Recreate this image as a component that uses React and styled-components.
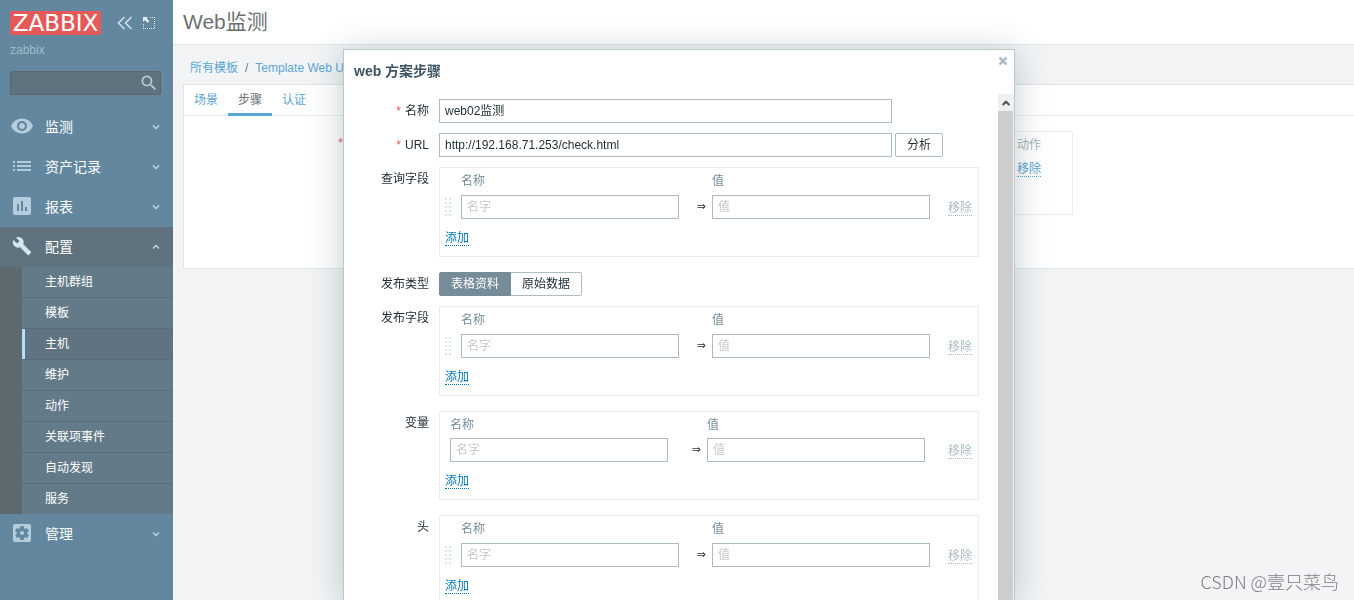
import React, { useState } from 'react';
import styled, { createGlobalStyle } from 'styled-components';
import {
  MdBuild,
  MdInsertChart,
  MdList,
  MdRemoveRedEye,
  MdSearch,
  MdSettingsApplications,
} from 'react-icons/md';

const GlobalStyle = createGlobalStyle`
  * {
    box-sizing: border-box;
  }

  body {
    margin: 0;
    background: #f2f4f5;
    color: #1f2c33;
    font-family: "Liberation Sans", "Noto Sans CJK SC", sans-serif;
    font-size: 12px;
    line-height: 24px;
  }

  button,
  input {
    font: inherit;
    color: inherit;
  }
`;

const Page = styled.div`
  display: flex;
  height: 100vh;
  overflow: hidden;
`;

/* sidebar */

const Sidebar = styled.aside`
  flex: none;
  width: 173px;
  background: #62879e;
  color: #ffffff;
`;

const SidebarTop = styled.div`
  display: flex;
  align-items: center;
  padding: 11px 0 0 10px;
`;

const Logo = styled.a`
  flex: none;
  width: 91px;
  height: 24px;
  margin-right: 16px;
  background: #e45959;
  color: #ffffff;
  font-family: "DejaVu Sans", sans-serif;
  font-size: 23px;
  line-height: 24px;
  text-align: center;
  text-decoration: none;
`;

const IconButton = styled.button`
  display: flex;
  flex: none;
  padding: 0;
  margin-right: 10px;
  border: 0;
  background: none;
  cursor: pointer;
`;

const ServerName = styled.div`
  padding: 3px 10px 0;
  color: #a3bccb;
`;

const Search = styled.form`
  display: flex;
  align-items: center;
  height: 24px;
  margin: 9px 12px 12px 10px;
  border: 1px solid #5c666c;
  border-radius: 2px;
  background: #60727e;
`;

const SearchInput = styled.input`
  flex: 1;
  min-width: 0;
  height: 22px;
  padding: 0 5px;
  border: 0;
  outline: 0;
  background: none;
`;

const SearchButton = styled(IconButton)`
  margin-right: 1px;
  color: #b3cddd;
`;

const MenuItem = styled.a`
  display: flex;
  align-items: center;
  height: 40px;
  padding: 0 13px 0 10px;
  background: ${({ $open }) => ($open ? '#60727e' : 'transparent')};
  color: #ffffff;
  font-size: 14px;
  text-decoration: none;
`;

const MenuIcon = styled.span`
  display: flex;
  justify-content: center;
  width: 24px;
  margin-right: 11px;
  padding-bottom: 2px;
  color: ${({ $open }) => ($open ? '#d2e6f4' : '#b3cddd')};
`;

const MenuText = styled.span`
  flex: 1;
`;

const Submenu = styled.nav`
  padding-left: 22px;
  background: #5e696f;
`;

const SubmenuItem = styled.a`
  display: block;
  height: 31px;
  padding-left: 23px;
  border-bottom: 1px solid #5d6a72;
  background: ${({ $active }) => ($active ? '#607380' : '#637b89')};
  box-shadow: ${({ $active }) => ($active ? 'inset 3px 0 #b0dfff' : 'none')};
  color: #ffffff;
  line-height: 30px;
  text-decoration: none;

  &:last-child {
    height: 30px;
    border-bottom: 0;
  }
`;

/* page behind the dialog */

const Main = styled.main`
  flex: 1;
  min-width: 0;
`;

const PageHeader = styled.header`
  height: 45px;
  padding: 0 10px;
  border-bottom: 1px solid #dfe4e7;
  background: #ffffff;
`;

const PageTitle = styled.h1`
  margin: 0;
  color: #6c7073;
  font-size: 21px;
  font-weight: normal;
  line-height: 44px;
`;

const Breadcrumbs = styled.nav`
  display: flex;
  gap: 7px;
  padding: 11px 17px 4px;
  color: #70777b;
`;

const Link = styled.a`
  color: #5ba5d5;
  text-decoration: none;
`;

const DottedLink = styled(Link)`
  display: inline-block;
  height: 16px;
  border-bottom: 1px dotted #5ba5d5;
`;

const Panel = styled.section`
  height: 185px;
  margin-left: 10px;
  border: 1px solid #dfe4e7;
  border-right: 0;
  background: #ffffff;
`;

const Tabs = styled.div`
  display: flex;
  height: 31px;
  border-bottom: 1px solid #ebeef0;
`;

const Tab = styled.button`
  height: 31px;
  padding: 2px 10px 0;
  border: 0;
  border-bottom: 3px solid ${({ $active }) => ($active ? '#5ba5d5' : 'transparent')};
  background: none;
  color: ${({ $active }) => ($active ? '#6c7073' : '#5ba5d5')};
  line-height: 26px;
  cursor: pointer;
`;

const PanelRow = styled.div`
  display: flex;
  gap: 10px;
  padding: 15px 0 0;
`;

const StepsLabel = styled.div`
  flex: none;
  width: 187px;
  color: #6c7073;
  text-align: right;
`;

const StepsBox = styled.div`
  width: 692px;
  height: 84px;
  border: 1px solid #ebeef0;
`;

const StepsTable = styled.table`
  width: 100%;
  border-collapse: collapse;
  line-height: 16px;

  th,
  td {
    height: 22px;
    padding: 0;
    font-weight: normal;
    text-align: left;
  }

  th {
    height: 26px;
    color: #a5b3ba;
  }

  th:last-child {
    width: 55px;
  }
`;

const Required = styled.span`
  margin-right: 4px;
  color: #e45959;
`;

/* dialog */

const Overlay = styled.div`
  position: fixed;
  inset: 0;
  display: flex;
  justify-content: center;
  padding: 49px 0 0 4px;
`;

const Dialog = styled.div`
  display: flex;
  flex-direction: column;
  width: 672px;
  max-width: 100%;
  border: 1px solid #bcc7cd;
  border-bottom: 0;
  background: #ffffff;
  box-shadow: 0 4px 32px rgba(60, 85, 99, 0.3);
`;

const DialogHeader = styled.div`
  display: flex;
  flex: none;
  justify-content: space-between;
  height: 44px;
  padding-left: 10px;
`;

const DialogTitle = styled.h2`
  margin: 0;
  color: #3c5563;
  font-size: 14px;
  font-weight: bold;
  line-height: 42px;
`;

const CloseButton = styled.button`
  display: flex;
  align-items: center;
  justify-content: center;
  width: 22px;
  height: 22px;
  padding: 0;
  border: 0;
  background: none;
  cursor: pointer;
`;

const DialogBody = styled.div`
  display: flex;
  flex: 1;
  min-height: 0;
`;

const Form = styled.form`
  display: flex;
  flex: 1;
  flex-direction: column;
  gap: 10px;
  padding: 5px 19px 0 10px;
  overflow: hidden;
`;

const Field = styled.div`
  display: grid;
  flex: none;
  grid-template-columns: 75px 1fr;
  column-gap: 10px;
  padding-bottom: ${({ $tall }) => ($tall ? '5px' : '0')};
`;

const FieldLabel = styled.label`
  text-align: right;
`;

const Controls = styled.div`
  display: flex;
  gap: 3px;
`;

const TextInput = styled.input`
  display: block;
  width: ${({ $wide }) => ($wide ? '453px' : '100%')};
  height: 24px;
  padding: 0 5px;
  border: 1px solid #acbbc2;
  border-radius: 0;
  outline: 0;
  background: #ffffff;

  &::placeholder {
    color: #c8c8c8;
    opacity: 1;
  }
`;

const Button = styled.button`
  width: 48px;
  height: 24px;
  padding: 0;
  border: 1px solid #acbbc2;
  border-radius: 2px;
  background: #ffffff;
  line-height: 22px;
  cursor: pointer;
`;

const Segments = styled.div`
  display: flex;
`;

const HiddenRadio = styled.input`
  position: absolute;
  opacity: 0;
  pointer-events: none;
`;

const Segment = styled.label`
  height: 24px;
  padding: 0 11px;
  border: 1px solid #acbbc2;
  border-left-width: 0;
  border-radius: 0 2px 2px 0;
  line-height: 22px;
  cursor: pointer;

  &:first-child {
    border-left-width: 1px;
    border-radius: 2px 0 0 2px;
  }

  &:has(input:checked) {
    border-color: #768d99;
    background: #768d99;
    color: #ffffff;
  }
`;

const PairsBox = styled.div`
  border: 1px solid #ebeef0;
`;

const PairsTable = styled.table`
  width: 100%;
  border-collapse: collapse;
  table-layout: fixed;

  th,
  td {
    padding: 0;
    font-weight: normal;
    text-align: left;
  }

  th {
    height: ${({ $sortable }) => ($sortable ? '27px' : '26px')};
    padding-top: 1px;
    color: #768d99;
    vertical-align: top;
  }

  tfoot td {
    height: 37px;
    padding-left: 5px;
  }
`;

const NameCell = styled.td`
  && {
    padding-left: ${({ $sortable }) => ($sortable ? '0' : '10px')};
  }
`;

const HandleCell = styled.td`
  && {
    padding-left: 5px;
  }

  svg {
    display: block;
  }
`;

const ArrowCell = styled.td`
  && {
    padding-right: 6px;
    font-family: "DejaVu Sans", sans-serif;
    font-size: 11px;
    text-align: right;
  }
`;

const ActionCell = styled.td`
  && {
    padding-right: 6px;
    text-align: right;
  }
`;

const TextButton = styled.button`
  display: block;
  height: 17px;
  padding: 2px 0 0;
  border: 0;
  border-bottom: 1px dotted currentColor;
  background: none;
  color: #0275b8;
  line-height: 14px;
  cursor: pointer;

  &:disabled {
    margin-left: auto;
    color: #acbbc2;
    cursor: default;
  }
`;

const Scrollbar = styled.div`
  flex: none;
  width: 16px;
  background: linear-gradient(#cdcdcd, #cdcdcd) 0 17px / 15px 100% no-repeat #f0f0f0;
`;

const ScrollUp = styled.button`
  display: flex;
  align-items: center;
  justify-content: center;
  width: 16px;
  height: 17px;
  padding: 0;
  border: 0;
  background: #f0f0f0;
`;

const Watermark = styled.div`
  position: fixed;
  right: 15px;
  bottom: 7px;
  color: #7b7f81;
  font-family: "Noto Sans CJK SC", sans-serif;
  font-size: 18px;
  font-weight: 300;
`;

const menu = [
  { label: '监测', icon: <MdRemoveRedEye size={24} /> },
  { label: '资产记录', icon: <MdList size={24} /> },
  { label: '报表', icon: <MdInsertChart size={24} /> },
  {
    label: '配置',
    icon: <MdBuild size={20} />,
    items: ['主机群组', '模板', '主机', '维护', '动作', '关联项事件', '自动发现', '服务'],
  },
  { label: '管理', icon: <MdSettingsApplications size={24} /> },
];

const Chevron = ({ up }) => (
  <svg width="8" height="6" viewBox="0 0 8 6" fill="none" stroke="#c5d9e5" strokeWidth="1.3">
    <path d={up ? 'M1 4.5L4 1.5L7 4.5' : 'M1 1.5L4 4.5L7 1.5'} />
  </svg>
);

const DragHandle = () => (
  <svg width="6" height="18" fill="#dfe4e7" shapeRendering="crispEdges">
    {[0, 4, 8, 12, 16].map((y) => (
      <React.Fragment key={y}>
        <rect x="0" y={y} width="2" height="2" />
        <rect x="4" y={y} width="2" height="2" />
      </React.Fragment>
    ))}
  </svg>
);

const Pairs = ({ label, sortable = true }) => (
  <Field $tall>
    <FieldLabel as="span">{label}</FieldLabel>
    <PairsBox>
      <PairsTable $sortable={sortable} aria-label={label}>
        <colgroup>
          {sortable && <col width="21" />}
          <col width={sortable ? 218 : 228} />
          <col width={sortable ? 33 : 39} />
          <col width="218" />
          <col />
        </colgroup>
        <thead>
          <tr>
            {sortable && <th />}
            <NameCell as="th" $sortable={sortable}>名称</NameCell>
            <th />
            <th>值</th>
            <th />
          </tr>
        </thead>
        <tbody>
          <tr>
            {sortable && <HandleCell><DragHandle /></HandleCell>}
            <NameCell $sortable={sortable}>
              <TextInput type="text" placeholder="名字" aria-label={`${label} 名称`} />
            </NameCell>
            <ArrowCell>⇒</ArrowCell>
            <td>
              <TextInput type="text" placeholder="值" aria-label={`${label} 值`} />
            </td>
            <ActionCell>
              <TextButton type="button" disabled>移除</TextButton>
            </ActionCell>
          </tr>
        </tbody>
        <tfoot>
          <tr>
            <td colSpan={sortable ? 5 : 4}>
              <TextButton type="button">添加</TextButton>
            </td>
          </tr>
        </tfoot>
      </PairsTable>
    </PairsBox>
  </Field>
);

const StepDialog = () => {
  const [postType, setPostType] = useState('form');

  return (
    <Overlay>
      <Dialog role="dialog" aria-labelledby="dialog-title">
        <DialogHeader>
          <DialogTitle id="dialog-title">web 方案步骤</DialogTitle>
          <CloseButton type="button" aria-label="关闭">
            <svg width="8" height="8" viewBox="0 0 8 8" stroke="#acbbc2" strokeWidth="2.4">
              <path d="M0.5 0.5L7.5 7.5M7.5 0.5L0.5 7.5" />
            </svg>
          </CloseButton>
        </DialogHeader>
        <DialogBody>
          <Form>
            <Field>
              <FieldLabel htmlFor="step-name"><Required>*</Required>名称</FieldLabel>
              <Controls>
                <TextInput $wide id="step-name" type="text" defaultValue="web02监测" />
              </Controls>
            </Field>
            <Field>
              <FieldLabel htmlFor="step-url"><Required>*</Required>URL</FieldLabel>
              <Controls>
                <TextInput
                  $wide
                  id="step-url"
                  type="text"
                  defaultValue="http://192.168.71.253/check.html"
                />
                <Button type="button">分析</Button>
              </Controls>
            </Field>
            <Pairs label="查询字段" />
            <Field>
              <FieldLabel as="span">发布类型</FieldLabel>
              <Segments>
                <Segment>
                  <HiddenRadio
                    type="radio"
                    name="post-type"
                    checked={postType === 'form'}
                    onChange={() => setPostType('form')}
                  />
                  表格资料
                </Segment>
                <Segment>
                  <HiddenRadio
                    type="radio"
                    name="post-type"
                    checked={postType === 'raw'}
                    onChange={() => setPostType('raw')}
                  />
                  原始数据
                </Segment>
              </Segments>
            </Field>
            <Pairs label="发布字段" />
            <Pairs label="变量" sortable={false} />
            <Pairs label="头" />
          </Form>
          <Scrollbar>
            <ScrollUp type="button" aria-label="向上滚动">
              <svg width="8" height="6" viewBox="0 0 8 6" fill="none" stroke="#505050" strokeWidth="2">
                <path d="M0.7 5L4 1.7L7.3 5" />
              </svg>
            </ScrollUp>
          </Scrollbar>
        </DialogBody>
      </Dialog>
    </Overlay>
  );
};

const App = () => (
  <>
    <GlobalStyle />
    <Page>
      <Sidebar>
        <SidebarTop>
          <Logo href="#">ZABBIX</Logo>
          <IconButton type="button" aria-label="收起侧边栏">
            <svg width="16" height="14" viewBox="0 0 16 14" fill="none" stroke="#d5e3ec" strokeWidth="1.5">
              <path d="M7.5 1L1.5 7L7.5 13M14.5 1L8.5 7L14.5 13" />
            </svg>
          </IconButton>
          <IconButton type="button" aria-label="隐藏侧边栏">
            <svg width="12" height="12" viewBox="0 0 12 12" fill="none" stroke="#e3edf3">
              <path d="M7 0.5H12M11.5 2V12M0.5 7V12M2 11.5H12" strokeDasharray="1 1" />
              <path d="M0 0H5L3.7 1.3L6.5 4.2L4.7 5.8L1.8 3.2L0 5Z" fill="#e3edf3" stroke="none" />
            </svg>
          </IconButton>
        </SidebarTop>
        <ServerName>zabbix</ServerName>
        <Search role="search">
          <SearchInput type="text" aria-label="搜索" />
          <SearchButton type="button" aria-label="搜索">
            <MdSearch size={20} />
          </SearchButton>
        </Search>
        {menu.map(({ label, icon, items }) => (
          <React.Fragment key={label}>
            <MenuItem href="#" $open={Boolean(items)}>
              <MenuIcon $open={Boolean(items)}>{icon}</MenuIcon>
              <MenuText>{label}</MenuText>
              <Chevron up={Boolean(items)} />
            </MenuItem>
            {items && (
              <Submenu>
                {items.map((item) => (
                  <SubmenuItem key={item} href="#" $active={item === '主机'}>{item}</SubmenuItem>
                ))}
              </Submenu>
            )}
          </React.Fragment>
        ))}
      </Sidebar>
      <Main>
        <PageHeader>
          <PageTitle>Web监测</PageTitle>
        </PageHeader>
        <Breadcrumbs>
          <Link href="#">所有模板</Link>
          <span>/</span>
          <Link href="#">Template Web URL</Link>
        </Breadcrumbs>
        <Panel>
          <Tabs>
            <Tab type="button">场景</Tab>
            <Tab type="button" $active>步骤</Tab>
            <Tab type="button">认证</Tab>
          </Tabs>
          <PanelRow>
            <StepsLabel><Required>*</Required>步骤</StepsLabel>
            <StepsBox>
              <StepsTable>
                <thead>
                  <tr>
                    <th />
                    <th>动作</th>
                  </tr>
                </thead>
                <tbody>
                  <tr>
                    <td />
                    <td><DottedLink href="#">移除</DottedLink></td>
                  </tr>
                </tbody>
              </StepsTable>
            </StepsBox>
          </PanelRow>
        </Panel>
      </Main>
    </Page>
    <StepDialog />
    <Watermark>CSDN @壹只菜鸟</Watermark>
  </>
);

export default App;
